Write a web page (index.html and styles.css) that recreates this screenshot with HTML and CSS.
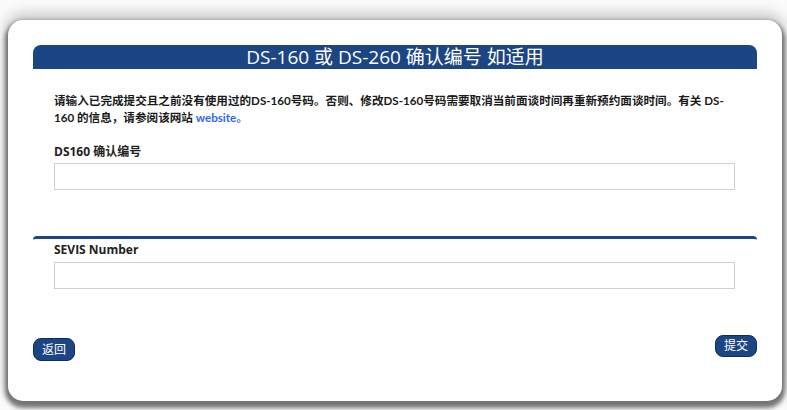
FILE: index.html
```html
<!DOCTYPE html>
<html lang="zh-CN">
<head>
<meta charset="utf-8">
<title>DS-160 确认编号</title>
<link rel="stylesheet" href="styles.css">
</head>
<body>
<div class="frame">
  <div class="card">
    <h1 class="section-title">DS-160 或 DS-260 确认编号 如适用</h1>
    <div class="section-body">
      <p class="intro">请输入已完成提交且之前没有使用过的DS-160号码。否则、修改DS-160号码需要取消当前面谈时间再重新预约面谈时间。有关 DS-160 的信息，请参阅该网站 <a class="link" href="#">website。</a></p>
      <label class="field-label" for="ds160">DS160 确认编号</label>
      <input class="field-input" id="ds160" type="text">
    </div>
    <div class="section-rule"></div>
    <div class="section-body tight">
      <label class="field-label" for="sevis">SEVIS Number</label>
      <input class="field-input" id="sevis" type="text">
    </div>
    <div class="actions">
      <button class="btn btn-back" type="button">返回</button>
      <button class="btn" type="button">提交</button>
    </div>
  </div>
</div>
</body>
</html>
```
FILE: styles.css
```css
* { box-sizing: border-box; }
html, body { margin: 0; padding: 0; }
body {
  background: #fbfbfb;
  font-family: "Open Sans", "Noto Sans CJK SC", sans-serif;
  width: 787px;
  height: 410px;
  overflow: hidden;
}
.frame {
  padding: 20px 5px 9px 8px;
  height: 410px;
}
.card {
  background: #fff;
  border-radius: 15px;
  height: 381px;
  padding: 25px 25px 0 25px;
  box-shadow: 0 4px 4px 3px rgba(0,0,0,0.5), 0 -4px 14px 3px rgba(0,0,0,0.2);
  display: flex;
  flex-direction: column;
}
.section-title {
  margin: 0;
  height: 24px;
  background: #1c4583;
  color: #fff;
  border-radius: 8px 8px 0 0;
  font-size: 19px;
  font-weight: 400;
  line-height: 25px;
  text-align: center;
}
.section-body {
  padding: 23px 22px 0 21px;
  display: flex;
  flex-direction: column;
}
.section-body.tight { padding-top: 1px; }
.intro {
  margin: 0 0 17px 0;
  font-family: "Lato", "Noto Sans CJK SC", sans-serif;
  font-size: 11.6px;
  font-weight: 700;
  line-height: 17px;
  color: #1a1a1a;
}
.link {
  color: #2f66f0;
  text-decoration: none;
}
.field-label {
  display: block;
  font-size: 12px;
  font-weight: 700;
  line-height: 17px;
  color: #222;
  margin-bottom: 3px;
}
.tight .field-label { margin-bottom: 4px; }
.field-input {
  display: block;
  width: 100%;
  height: 27px;
  border: 1px solid #cfcfcf;
  background: #fff;
  margin: 0;
  padding: 0 6px;
  font: inherit;
}
.section-rule {
  margin-top: 46px;
  height: 4px;
  border-top: 3px solid #1c4583;
  border-radius: 7px 7px 0 0;
}
.actions {
  margin-top: 46px;
  display: flex;
  justify-content: space-between;
  align-items: flex-start;
}
.btn {
  height: 22px;
  padding: 0 8px;
  border: 1px solid #0f2d5c;
  border-radius: 8px;
  background: #1c4583;
  color: #fff;
  font-family: "Open Sans", "Noto Sans CJK SC", sans-serif;
  font-size: 12px;
  line-height: 20px;
  cursor: pointer;
}
.btn-back {
  margin-top: 3px;
  height: 23px;
}
```
